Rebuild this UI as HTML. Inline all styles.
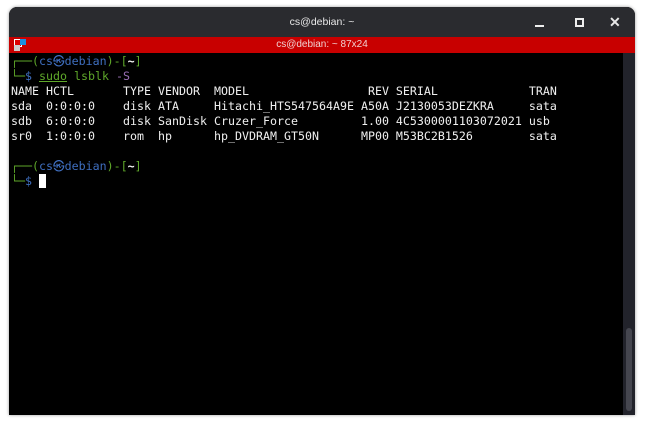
<!DOCTYPE html>
<html><head><style>
body{margin:0;width:645px;height:425px;background:#fff;position:relative;overflow:hidden;font-family:"Liberation Sans",sans-serif}
#win{position:absolute;left:9px;top:7px;width:626px;height:408px;background:#000;border-radius:8px 8px 0 0;overflow:hidden;box-shadow:0 0 3px rgba(0,0,0,.4)}
#tb{position:absolute;left:0;top:0;width:626px;height:30px;background:#2a2b2f;color:#e8e8e8;font-size:10.5px;text-align:center;line-height:30px}
#red{position:absolute;left:0;top:30px;width:626px;height:16px;background:#c80000;color:#f0d0d0;font-size:10px;text-align:center;line-height:16px}
#sb{position:absolute;left:614px;top:46px;width:12px;height:362px;background:#22232b}
#thumb{position:absolute;left:3px;top:275px;width:6px;height:83px;background:#45464f;border-radius:3px}
pre{position:absolute;left:2px;top:47px;margin:0;font-family:"DejaVu Sans Mono","Liberation Mono",monospace;font-size:11.63px;line-height:15px;color:#f0f0f0}
.g{color:#5fa82a}.b{color:#3f6fc0}.p{color:#9a6fb5}
</style></head><body>
<div id="win">
<div id="tb">cs@debian: ~
<span style="position:absolute;left:526px;top:18px;width:9px;height:2px;background:#eee"></span>
<span style="position:absolute;left:566px;top:11px;width:5px;height:5px;border:2px solid #eee"></span>
<span style="position:absolute;left:600px;top:0;font-size:14px;font-weight:bold">✕</span>
</div>
<div id="red">cs@debian: ~ 87x24
<span style="position:absolute;left:5px;top:2px;width:6px;height:6px;background:#d00;border:1px solid #fff"></span>
<span style="position:absolute;left:11px;top:2px;width:6px;height:6px;background:#1a8fe0"></span>
<span style="position:absolute;left:5px;top:8px;width:6px;height:6px;background:#ccc"></span>
</div>
<pre><span class="g">┌──(</span><span class="b">cs㉿debian</span><span class="g">)-[</span><b>~</b><span class="g">]</span>
<span class="g">└─</span><span class="b">$</span> <span class="g" style="text-decoration:underline">sudo</span><span class="g"> lsblk</span> <span class="p">-S</span>
NAME HCTL       TYPE VENDOR  MODEL                 REV SERIAL             TRAN
sda  0:0:0:0    disk ATA     Hitachi_HTS547564A9E A50A J2130053DEZKRA     sata
sdb  6:0:0:0    disk SanDisk Cruzer_Force         1.00 4C5300001103072021 usb
sr0  1:0:0:0    rom  hp      hp_DVDRAM_GT50N      MP00 M53BC2B1526        sata

<span class="g">┌──(</span><span class="b">cs㉿debian</span><span class="g">)-[</span><b>~</b><span class="g">]</span>
<span class="g">└─</span><span class="b">$</span> <span style="background:#fff"> </span></pre>
<div id="sb"><div id="thumb"></div></div>
</div>
</body></html>
